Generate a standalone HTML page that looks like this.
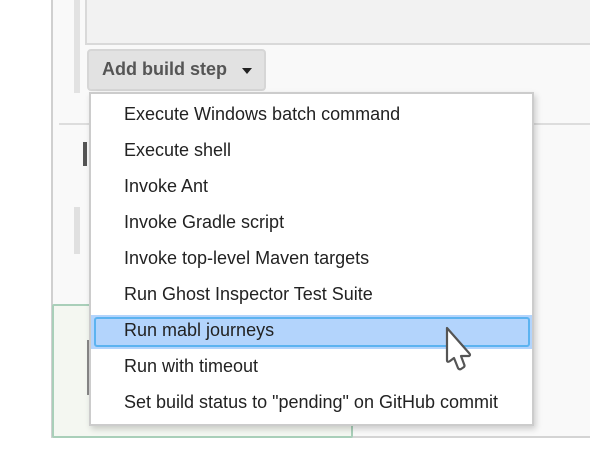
<!DOCTYPE html><html><head><style>
body{margin:0;width:590px;height:474px;background:#fff;position:relative;overflow:hidden;font-family:"Liberation Sans",sans-serif}
div{position:absolute;box-sizing:border-box}
.it{left:33px;height:36px;line-height:36px;font-size:18px;color:#222;white-space:nowrap}
</style></head><body>
<div style="left:51px;top:0;width:539px;height:438px;background:#f9f9f9;border-left:2px solid #d0d0d0;border-bottom:2px solid #d4d4d4"></div>
<div style="left:74px;top:0;width:6px;height:93px;background:#e2e2e2"></div>
<div style="left:85px;top:0;width:505px;height:45px;background:#f2f2f2;border-left:2px solid #d9d9d9;border-bottom:2px solid #d9d9d9"></div>
<div style="left:87px;top:49px;width:179px;height:42px;background:#e2e2e2;border:2px solid #d6d6d6;border-radius:4px;font-weight:bold;color:#555;font-size:18px;line-height:37px;padding-left:13px">Add build step<span style="position:absolute;left:153px;top:17px;width:0;height:0;border-left:5px solid transparent;border-right:5px solid transparent;border-top:6px solid #222"></span></div>
<div style="left:59px;top:123px;width:531px;height:2px;background:#ddd"></div>
<div style="left:83px;top:142px;width:4px;height:24px;background:#555"></div>
<div style="left:74px;top:207px;width:6px;height:47px;background:#e0e0e0"></div>
<div style="left:52px;top:304px;width:301px;height:134px;background:#f4f7f1;border:2px solid #a9cfb9;border-radius:2px"></div>
<div style="left:87px;top:340px;width:2px;height:55px;background:#888"></div>
<div style="left:89px;top:92px;width:445px;height:334px;background:#fff;border:2px solid #ccc;box-shadow:2px 3px 6px rgba(0,0,0,.18)">
<div style="left:0;top:221px;width:441px;height:34px;background:#b3d4fc"></div>
<div style="left:3px;top:223px;width:436px;height:30px;border:2px solid #5cb3f0;border-radius:3px"></div>
<div class="it" style="top:2px">Execute Windows batch command</div>
<div class="it" style="top:38px">Execute shell</div>
<div class="it" style="top:74px">Invoke Ant</div>
<div class="it" style="top:110px">Invoke Gradle script</div>
<div class="it" style="top:146px">Invoke top-level Maven targets</div>
<div class="it" style="top:182px">Run Ghost Inspector Test Suite</div>
<div class="it" style="top:218px">Run mabl journeys</div>
<div class="it" style="top:254px">Run with timeout</div>
<div class="it" style="top:290px">Set build status to "pending" on GitHub commit</div>
</div>
<svg style="position:absolute;left:444px;top:326px" width="32" height="48" viewBox="0 0 32 48"><path d="M3 2 L3 34 Q3 37 6 35 L10 32 L14 42 Q15 44 17 43 L20 41 Q21 40 20 38 L17 30 L25 30 Q27 29 25 27 Z" fill="#fff" stroke="#555" stroke-width="2.2" stroke-linejoin="round"/></svg>
</body></html>
